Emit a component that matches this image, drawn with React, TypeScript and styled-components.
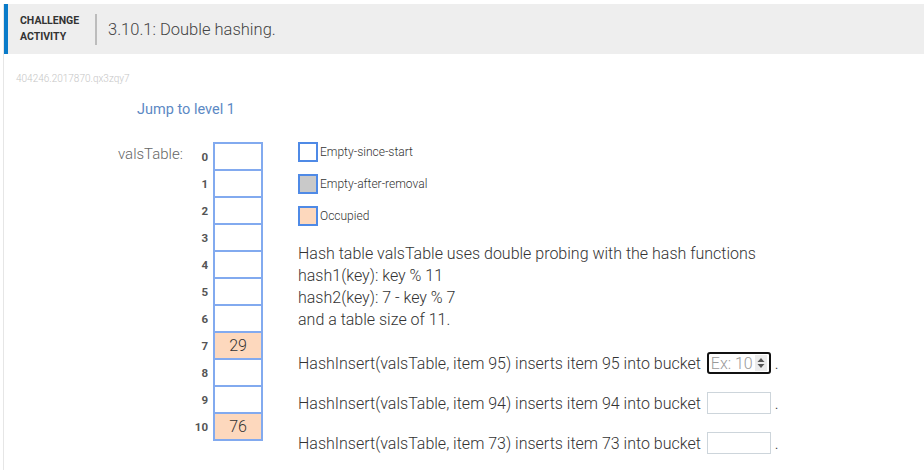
import React from 'react';
import styled, { createGlobalStyle } from 'styled-components';

const GlobalStyle = createGlobalStyle`
  body {
    margin: 0;
    background: #ffffff;
    font-family: Roboto, 'Liberation Sans', sans-serif;
    color: #333333;
  }
`;

interface Slot {
  index: number;
  value?: number;
}

interface LegendEntry {
  label: string;
  fill: string;
}

interface Question {
  item: number;
  focused?: boolean;
}

const slots: Slot[] = [
  { index: 0 },
  { index: 1 },
  { index: 2 },
  { index: 3 },
  { index: 4 },
  { index: 5 },
  { index: 6 },
  { index: 7, value: 29 },
  { index: 8 },
  { index: 9 },
  { index: 10, value: 76 },
];

const legend: LegendEntry[] = [
  { label: 'Empty-since-start', fill: '#ffffff' },
  { label: 'Empty-after-removal', fill: '#c9c9c9' },
  { label: 'Occupied', fill: '#fdd8bd' },
];

const questions: Question[] = [{ item: 95, focused: true }, { item: 94 }, { item: 73 }];

const App = () => {
  return (
    <>
      <GlobalStyle />
      <Page>
        <Card>
          <Header>
            <ActivityLabel>
              CHALLENGE
              <br />
              ACTIVITY
            </ActivityLabel>
            <Separator />
            <Title>3.10.1: Double hashing.</Title>
          </Header>
          <Content>
            <ActivityId>404246.2017870.qx3zqy7</ActivityId>
            <JumpLink>Jump to level 1</JumpLink>
            <Workspace>
              <TableLabel>valsTable:</TableLabel>
              <HashTable>
                <tbody>
                  {slots.map((slot) => (
                    <tr key={slot.index}>
                      <IndexCell>{slot.index}</IndexCell>
                      <BucketCell occupied={slot.value !== undefined}>{slot.value}</BucketCell>
                    </tr>
                  ))}
                </tbody>
              </HashTable>
              <Details>
                <Legend>
                  {legend.map((entry) => (
                    <LegendItem key={entry.label}>
                      <Swatch fill={entry.fill} />
                      <LegendText>{entry.label}</LegendText>
                    </LegendItem>
                  ))}
                </Legend>
                <Description>
                  Hash table valsTable uses double probing with the hash functions
                  <br />
                  hash1(key): key % 11
                  <br />
                  hash2(key): 7 - key % 7
                  <br />
                  and a table size of 11.
                </Description>
                <Questions>
                  {questions.map((q) => (
                    <QuestionRow key={q.item}>
                      HashInsert(valsTable, item {q.item}) inserts item {q.item} into bucket
                      <InputWrap>
                        <BucketInput focused={!!q.focused} placeholder={q.focused ? 'Ex: 10' : ''} />
                        {q.focused && (
                          <Spinner>
                            <svg width="8" height="12" viewBox="0 0 8 12">
                              <path d="M4 1 L7.5 5 L0.5 5 Z" fill="#555" />
                              <path d="M4 11 L7.5 7 L0.5 7 Z" fill="#555" />
                            </svg>
                          </Spinner>
                        )}
                      </InputWrap>
                      <Period>.</Period>
                    </QuestionRow>
                  ))}
                </Questions>
              </Details>
            </Workspace>
          </Content>
        </Card>
      </Page>
    </>
  );
};

export default App;

const Page = styled.div`
  padding: 4px 0 0 3px;
`;

const Card = styled.div`
  border-left: 1px solid #e6e6e6;
  min-height: 466px;
`;

const Header = styled.div`
  height: 50px;
  background: #eeeeee;
  border-left: 4px solid #0a7bc9;
  display: flex;
  align-items: center;
  box-sizing: border-box;
  padding-left: 12px;
`;

const ActivityLabel = styled.div`
  font-size: 10.5px;
  font-weight: 700;
  line-height: 16px;
  color: #333333;
  width: 75px;
`;

const Separator = styled.div`
  width: 2px;
  height: 31px;
  background: #bcbcbc;
`;

const Title = styled.div`
  margin-left: 11px;
  font-size: 16.5px;
  font-weight: 300;
  color: #444444;
`;

const Content = styled.div`
  padding: 18px 0 0 12px;
`;

const ActivityId = styled.div`
  font-size: 10px;
  line-height: 13px;
  color: #c6c6c6;
  font-weight: 300;
`;

const JumpLink = styled.div`
  margin: 16px 0 0 121px;
  font-size: 14.5px;
  line-height: 18px;
  color: #5c89c4;
`;

const Workspace = styled.div`
  display: flex;
  align-items: flex-start;
  margin: 23px 0 0 102px;
`;

const TableLabel = styled.div`
  font-size: 15px;
  font-weight: 300;
  color: #666666;
  line-height: 25px;
  width: 74px;
`;

const HashTable = styled.table`
  border-collapse: collapse;
`;

const IndexCell = styled.td`
  width: 16px;
  padding: 0 5px 0 0;
  text-align: right;
  font-size: 11.5px;
  font-weight: 700;
  color: #555555;
  height: 25px;
  vertical-align: middle;
`;

const BucketCell = styled.td<{ occupied: boolean }>`
  width: 46px;
  height: 25px;
  padding: 0;
  border: 2px solid #82aaef;
  background: ${(props) => (props.occupied ? '#fdd8bd' : '#ffffff')};
  text-align: center;
  font-size: 16px;
  font-weight: 300;
  color: #333333;
`;

const Details = styled.div`
  margin-left: 35px;
  display: flex;
  flex-direction: column;
`;

const Legend = styled.div`
  display: flex;
  flex-direction: column;
  gap: 12px;
`;

const LegendItem = styled.div`
  display: flex;
  align-items: center;
  gap: 2px;
`;

const Swatch = styled.div<{ fill: string }>`
  width: 16px;
  height: 16px;
  border: 2px solid #4f8ae6;
  background: ${(props) => props.fill};
`;

const LegendText = styled.span`
  font-size: 12px;
  font-weight: 300;
  color: #333333;
`;

const Description = styled.div`
  margin-top: 17px;
  font-size: 16px;
  font-weight: 300;
  line-height: 22px;
  color: #333333;
`;

const Questions = styled.div`
  margin-top: 21px;
  display: flex;
  flex-direction: column;
  gap: 18px;
`;

const QuestionRow = styled.div`
  display: flex;
  align-items: center;
  height: 22px;
  font-size: 16px;
  font-weight: 300;
  color: #333333;
  white-space: pre;
`;

const InputWrap = styled.div`
  position: relative;
  margin-left: 6px;
`;

const BucketInput = styled.input<{ focused: boolean }>`
  box-sizing: border-box;
  width: 64px;
  height: 22px;
  padding: 0 2px;
  border: ${(props) => (props.focused ? '2px solid #111111' : '1px solid #cdd5db')};
  border-radius: ${(props) => (props.focused ? '3px' : '0')};
  font-family: Roboto, 'Liberation Sans', sans-serif;
  font-size: 16px;
  font-weight: 300;
  color: #333333;
  outline: none;

  &::placeholder {
    color: #9a9a9a;
  }
`;

const Spinner = styled.div`
  position: absolute;
  right: 4px;
  top: 3px;
  width: 12px;
  height: 16px;
  background: #ececec;
  display: flex;
  align-items: center;
  justify-content: center;
`;

const Period = styled.span`
  margin-left: 4px;
`;
